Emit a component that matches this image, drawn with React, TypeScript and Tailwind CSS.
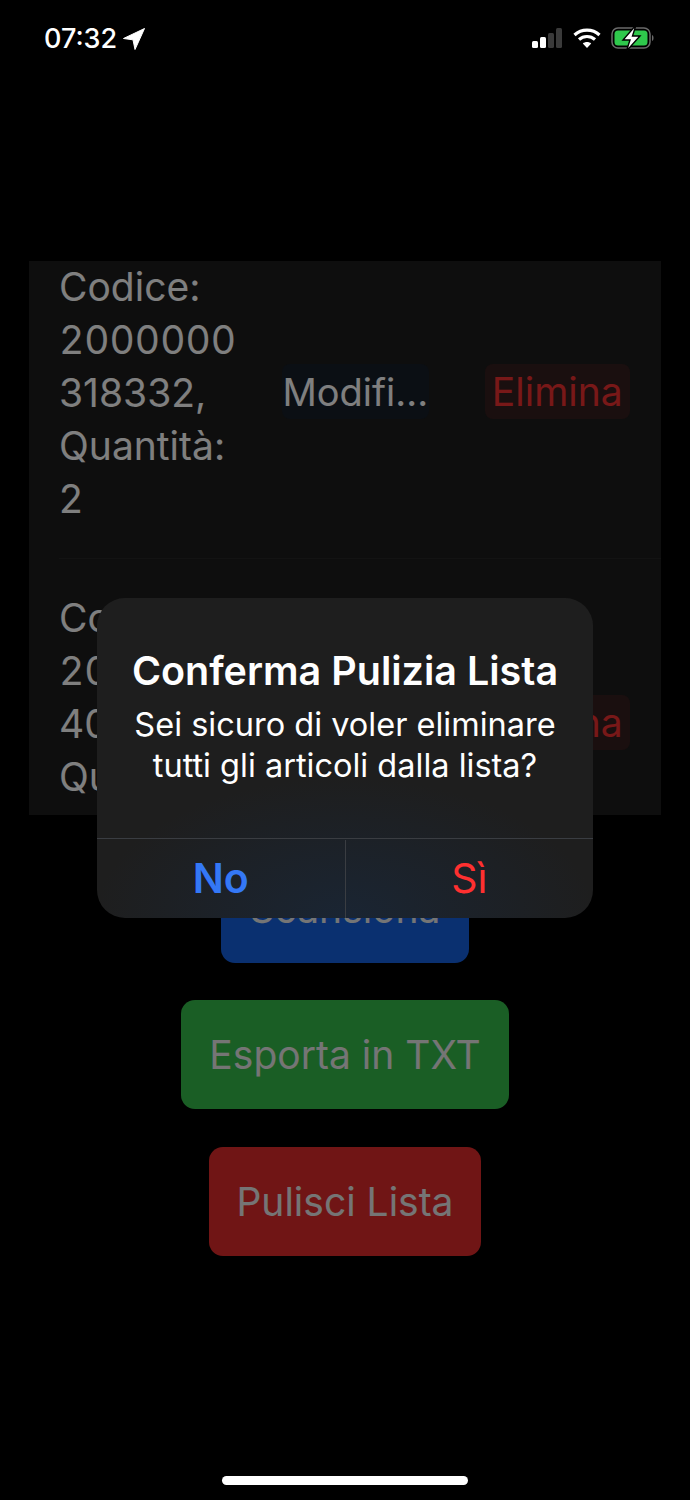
import React from "react";

function Row({ code, qty, first }: { code: string[]; qty: string; first?: boolean }) {
  return (
    <div className={`ml-[30px] flex items-center border-b border-[#262626] pr-[31px] ${first ? "-mt-[1px] pb-[33px]" : "pt-[32px] pb-[35px]"}`}>
      <div className="w-[181px] shrink-0 text-[39px] leading-[53px] text-white">
        <div>Codice:</div>
        <div className="tabular-nums">{code[0]}</div>
        <div>{code[1]}</div>
        <div>Quantità:</div>
        <div>{qty}</div>
      </div>
      <div className="mb-[3px] ml-[42px] flex h-[55px] w-[147px] items-center justify-center rounded-[8px] bg-[#161e28] pt-[3px] text-[38px] text-white">
        <span className="whitespace-nowrap">Modifi...</span>
      </div>
      <div className="mb-[3px] ml-[56px] flex h-[55px] w-[146px] items-center justify-center rounded-[8px] bg-[#341e1e] pt-[3px] text-[39px] text-[#f03030]">
        Elimina
      </div>
    </div>
  );
}

function ActionButton({ label, w, bg, mt }: { label: string; w: string; bg: string; mt: string }) {
  return (
    <div className={`flex h-[109px] items-center justify-center rounded-[14px] pt-[1px] text-[39px] text-[#eaeaea] ${w} ${bg} ${mt}`}>{label}</div>
  );
}

export default function App() {
  return (
    <div
      className="relative h-[1500px] w-[690px] overflow-hidden bg-black"
      style={{ fontFamily: "Inter, 'Liberation Sans', sans-serif" }}
    >
      <div className="flex flex-col items-center pt-[261px]">
        <div className="ml-[29px] h-[554px] w-[632px] self-start overflow-hidden bg-[#1c1c1c]">
          <Row first code={["2000000", "318332,"]} qty="2" />
          <Row code={["2000000", "400000,"]} qty="1" />
        </div>
        <ActionButton label="Scansiona" w="w-[248px]" bg="bg-[#1460e0]" mt="mt-[39px]" />
        <ActionButton label="Esporta in TXT" w="w-[328px]" bg="bg-[#34bc4a]" mt="mt-[37px]" />
        <ActionButton label="Pulisci Lista" w="w-[272px]" bg="bg-[#e02a2a]" mt="mt-[38px]" />
      </div>

      <div className="absolute inset-0 flex items-start justify-center bg-black/50 pt-[598px]">
        <div className="flex h-[320px] w-[496px] flex-col overflow-hidden rounded-[28px] bg-[radial-gradient(ellipse_250px_140px_at_50%_100%,#1a2533,#1e1e1e)]">
          <div className="flex flex-1 flex-col items-center pt-[48px] text-center text-white">
            <div className="whitespace-nowrap text-[39.5px] font-semibold leading-[50px]">Conferma Pulizia Lista</div>
            <div className="mt-[8px] whitespace-nowrap text-[32.5px] leading-[41px]">
              Sei sicuro di voler eliminare
              <br />
              tutti gli articoli dalla lista?
            </div>
          </div>
          <div className="flex h-[80px] border-t border-[#3a3d42] pt-[1px]">
            <div className="flex flex-1 items-center justify-center border-r border-[#3a3d42] text-[41px] font-semibold text-[#3478f6]">No</div>
            <div className="flex flex-1 items-center justify-center text-[41px] text-[#ff3030]">Sì</div>
          </div>
        </div>
      </div>

      <div className="absolute left-0 right-0 top-0 flex h-[76px] items-center justify-between pl-[44px] pr-[35px]">
        <div className="flex items-center gap-[6px] pt-[2px] text-[27px] font-medium text-white">
          <span>07:32</span>
          <svg width="22" height="22" viewBox="0 0 22 22"><path d="M21.5 0.5 L0.5 10.5 L10 11.8 L12 21.5 Z" fill="#fff" stroke="#fff" strokeLinejoin="round" /></svg>
        </div>
        <div className="flex items-center gap-[10px]">
          <svg width="32" height="20" viewBox="0 0 32 20">
            <rect x="1" y="13" width="6" height="7" rx="1.5" fill="#fff" />
            <rect x="9" y="9" width="6" height="11" rx="1.5" fill="#fff" />
            <rect x="17" y="5" width="6" height="15" rx="1.5" fill="#3a3a3a" />
            <rect x="25" y="0" width="6" height="20" rx="1.5" fill="#3a3a3a" />
          </svg>
          <svg width="28" height="20" viewBox="0 0 28 20" fill="none" stroke="#fff" strokeWidth="3.2">
            <path d="M1.5 7 C8.5 0.5 19.5 0.5 26.5 7" />
            <path d="M6 11.5 C10.5 7.5 17.5 7.5 22 11.5" />
            <path d="M14 20 L9.8 15.6 C12 13.6 16 13.6 18.2 15.6 Z" fill="#fff" stroke="none" />
          </svg>
          <svg width="44" height="26" viewBox="0 0 44 26">
            <rect x="1" y="3" width="38" height="20" rx="6" fill="none" stroke="#6a6a6a" strokeWidth="1.5" />
            <rect x="3.5" y="5.5" width="33" height="15" rx="3.5" fill="#2fc84c" />
            <path d="M41 10 C43 10.5 43 15.5 41 16 Z" fill="#6a6a6a" />
            <path d="M25 0 L12 15 H19 L15.5 26 L29 11 H21.5 Z" fill="#fff" stroke="#000" strokeWidth="1.4" />
          </svg>
        </div>
      </div>

      <div className="absolute bottom-[15px] left-[222px] h-[9px] w-[246px] rounded-full bg-white" />
    </div>
  );
}
